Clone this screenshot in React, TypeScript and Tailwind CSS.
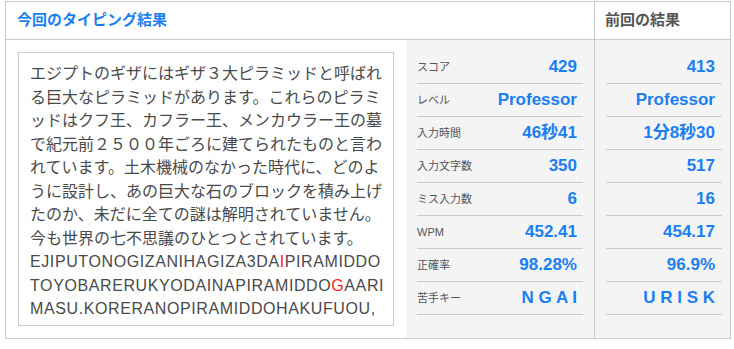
const jp = "font-['Liberation_Sans','Noto_Sans_CJK_JP',sans-serif]";

type Row = { label: string; now: string; prev: string };

const rows: Row[] = [
  { label: "スコア", now: "429", prev: "413" },
  { label: "レベル", now: "Professor", prev: "Professor" },
  { label: "入力時間", now: "46秒41", prev: "1分8秒30" },
  { label: "入力文字数", now: "350", prev: "517" },
  { label: "ミス入力数", now: "6", prev: "16" },
  { label: "WPM", now: "452.41", prev: "454.17" },
  { label: "正確率", now: "98.28%", prev: "96.9%" },
  { label: "苦手キー", now: "N G A I", prev: "U R I S K" },
];

const lines = [
  "エジプトのギザにはギザ３大ピラミッドと呼ばれ",
  "る巨大なピラミッドがあります。これらのピラミ",
  "ッドはクフ王、カフラー王、メンカウラー王の墓",
  "で紀元前２５００年ごろに建てられたものと言わ",
  "れています。土木機械のなかった時代に、どのよ",
  "うに設計し、あの巨大な石のブロックを積み上げ",
  "たのか、未だに全ての謎は解明されていません。",
  "今も世界の七不思議のひとつとされています。",
];

const App = () => {
  return (
    <div className={`min-h-screen bg-white pl-[5px] pt-[1px] ${jp}`}>
      <div className="flex w-[726px] border border-[#cccccc]">
        {/* 今回 */}
        <div className="flex w-[588px] flex-col">
          <div className="flex h-[38px] items-center border-b border-[#cccccc] px-[11px]">
            <h2 className="text-[15px] font-bold text-[#1a7ff0]">
              今回のタイピング結果
            </h2>
          </div>
          <div className="flex h-[298px]">
            <div className="w-[400px] p-[12px]">
              <div className="h-full overflow-hidden border border-[#cccccc] px-[11px] pt-[9px] text-[16px] leading-[23.5px] text-[#4a4a4a]">
                {lines.map((l) => (
                  <div key={l} className="whitespace-nowrap">
                    {l}
                  </div>
                ))}
                <div className="whitespace-nowrap tracking-[0.6px]">
                  EJIPUTONOGIZANIHAGIZA3DA
                  <span className="text-[#ff1a1a]">I</span>PIRAMIDDO
                </div>
                <div className="whitespace-nowrap tracking-[0.6px]">
                  TOYOBARERUKYODAINAPIRAMIDDO
                  <span className="text-[#ff1a1a]">G</span>AARI
                </div>
                <div className="whitespace-nowrap tracking-[0.6px]">
                  MASU.KORERANOPIRAMIDDOHAKUFUOU,
                </div>
              </div>
            </div>
            <div className="flex-1 bg-[#f4f4f4] px-[11px] pt-[11px]">
              {rows.map((r) => (
                <div
                  key={r.label}
                  className="flex h-[33px] items-center justify-between border-b border-[#cccccc] pr-[6px]"
                >
                  <span className="text-[11px] text-[#555555]">{r.label}</span>
                  <span className="whitespace-pre text-[17px] font-bold text-[#1a7ff0]">
                    {r.now}
                  </span>
                </div>
              ))}
            </div>
          </div>
        </div>
        {/* 前回 */}
        <div className="flex flex-1 flex-col border-l border-[#cccccc]">
          <div className="flex h-[38px] items-center border-b border-[#cccccc] px-[10px]">
            <h2 className="text-[15px] font-bold text-[#555555]">前回の結果</h2>
          </div>
          <div className="h-[298px] bg-[#f4f4f4] pl-[11px] pr-[8px] pt-[11px]">
            {rows.map((r) => (
              <div
                key={r.label}
                className="flex h-[33px] items-center justify-end border-b border-[#cccccc] pr-[7px]"
              >
                <span className="whitespace-pre text-[17px] font-bold text-[#1a7ff0]">
                  {r.prev}
                </span>
              </div>
            ))}
          </div>
        </div>
      </div>
    </div>
  );
};

export default App;
